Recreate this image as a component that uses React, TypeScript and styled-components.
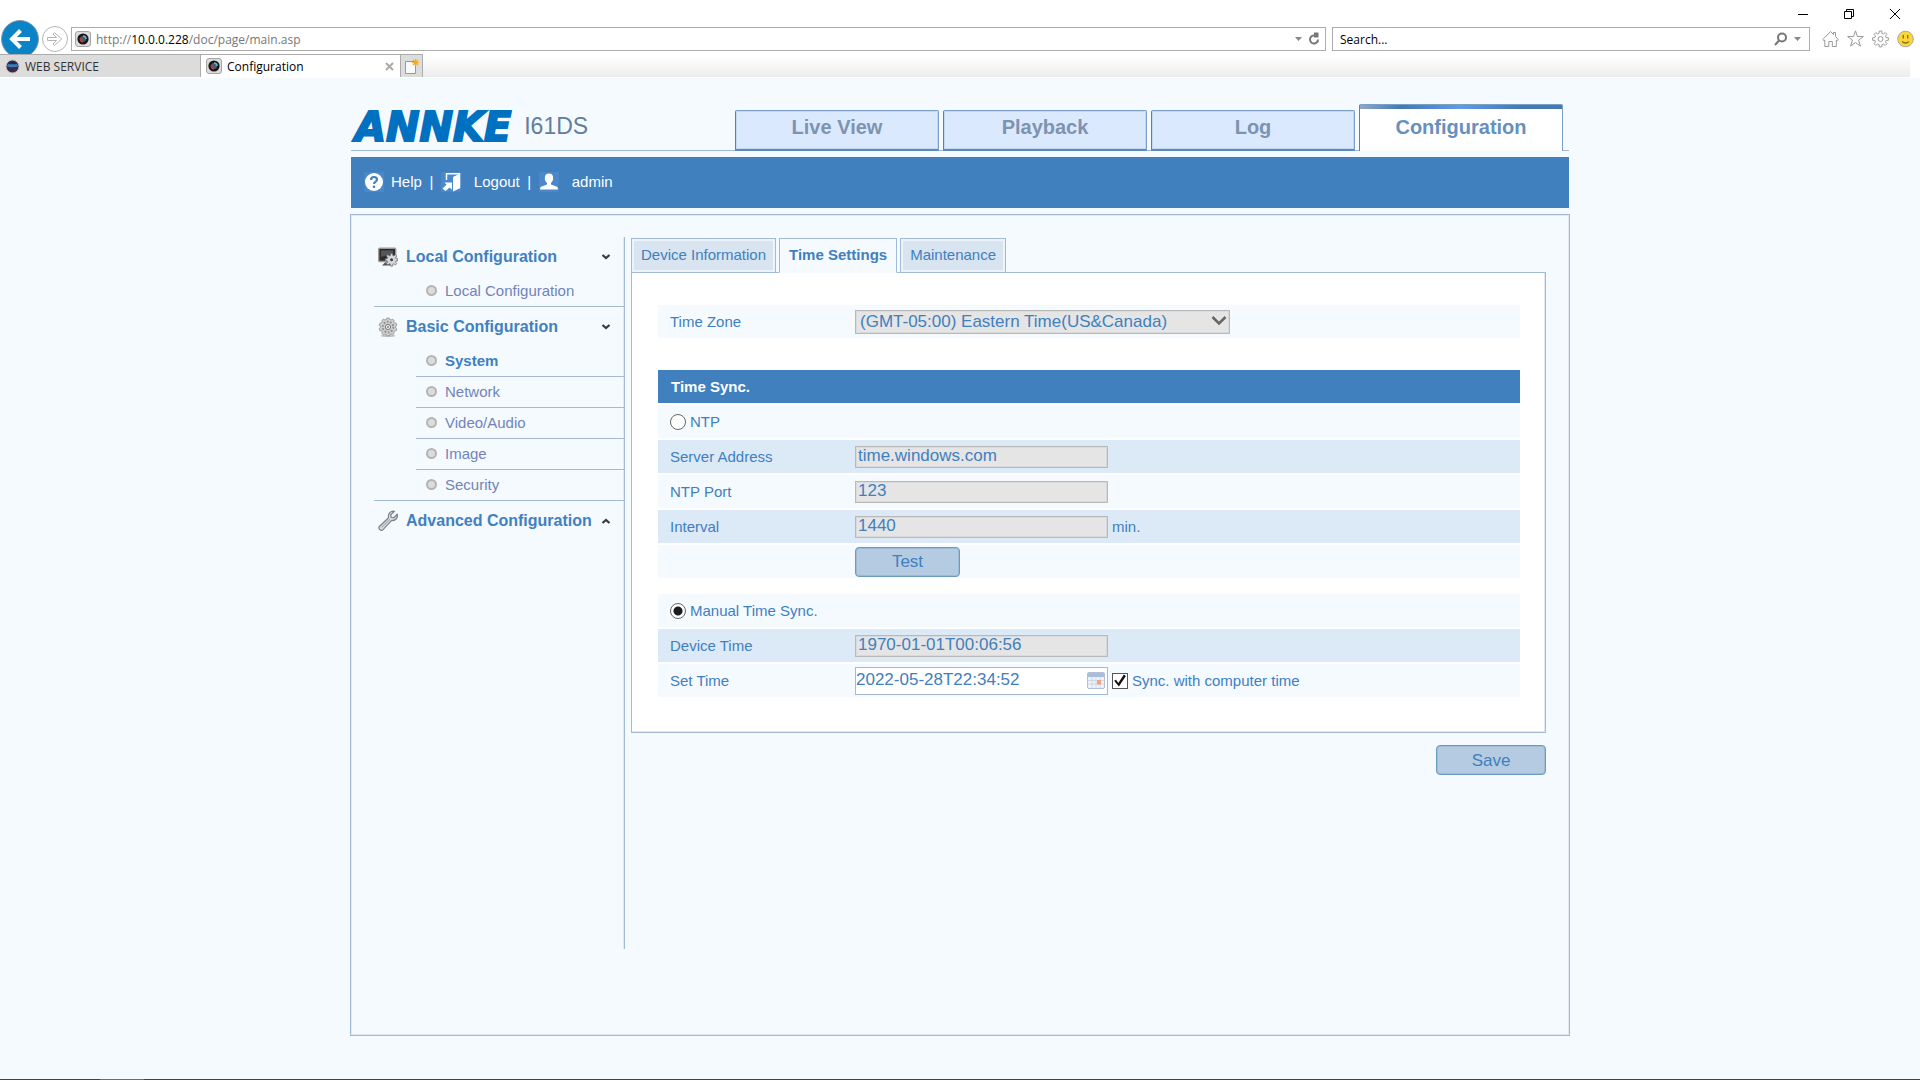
import React from "react";
import styled, { createGlobalStyle, css } from "styled-components";

const c = {
  page: "#f5faff",
  blue: "#4080bf",
  line: "#a3bad4",
  soft: "#e0e8f2",
  band: "#dce9f7",
  muted: "#7184b8",
};

const GlobalStyle = createGlobalStyle`
  *, *::before, *::after { box-sizing: border-box; }
  body { margin: 0; background: ${c.page}; }
  button, input, select { font-family: inherit; margin: 0; }
  svg { display: block; flex: none; }
`;

const Screen = styled.div`
  min-height: 100vh;
  display: flex;
  flex-direction: column;
  font-family: "Liberation Sans", Arial, sans-serif;
  font-size: 15px;
  color: ${c.blue};
`;

/* ---------- browser frame ---------- */

const Browser = styled.header`
  background: #fff;
  border-bottom: 1px solid #fff;
  font-family: "Open Sans", "Noto Sans", sans-serif;
  font-size: 12px;
  color: #000;
`;

const WindowBar = styled.div`
  height: 20px;
  padding: 8px 19px 0 0;
  display: flex;
  justify-content: flex-end;
  gap: 34px;
`;

const PlainButton = styled.button`
  display: flex;
  align-items: center;
  justify-content: center;
  padding: 0;
  border: 0;
  background: none;
  cursor: pointer;
`;

const NavBar = styled.div`
  height: 34px;
  padding: 4px 6px 0 1px;
  display: flex;
  align-items: center;
  overflow: hidden;
`;

const BackButton = styled(PlainButton)`
  flex: none;
  width: 38px;
  height: 38px;
  border: 1px solid #8a9aa5;
  border-radius: 50%;
  background: #0a84c6;
`;

const ForwardButton = styled(PlainButton)`
  flex: none;
  width: 26px;
  height: 26px;
  margin: 0 3px;
  border: 1px solid #b5b5b5;
  border-radius: 50%;
`;

const FieldBox = styled.div`
  height: 24px;
  display: flex;
  align-items: center;
  border: 1px solid #acacac;
  background: #fff;
`;

const AddressBox = styled(FieldBox)`
  flex: 1;
  padding: 0 4px 0 3px;
  gap: 5px;
`;

const Address = styled.div`
  flex: 1;
  color: #777;
  b { font-weight: 400; color: #000; }
`;

const SearchBox = styled(FieldBox)`
  width: 478px;
  margin-left: 6px;
  padding: 0 8px 0 7px;
  gap: 6px;
`;

const SearchInput = styled.input`
  flex: 1;
  min-width: 0;
  padding: 0;
  border: 0;
  outline: 0;
  font-size: 12px;
  background: none;
  &::placeholder { color: #000; opacity: 1; }
`;

const Tools = styled.div`
  display: flex;
  gap: 8px;
  margin-left: 12px;
`;

const TabStrip = styled.div`
  height: 23px;
  display: flex;
  margin-right: 10px;
  background: linear-gradient(#fff 10%, #ececec);
`;

const BrowserTab = styled.div<{ $on?: boolean }>`
  width: ${(p) => (p.$on ? 200 : 201)}px;
  padding: 0 6px 0 5px;
  display: flex;
  align-items: center;
  gap: 5px;
  border: solid #acacac;
  border-width: 1px 1px 0 0;
  background: ${(p) => (p.$on ? "#fff" : "#dcdcdc")};
  color: ${(p) => (p.$on ? "#000" : "#333")};
`;

const TabName = styled.span`
  flex: 1;
`;

const NewTab = styled(PlainButton)`
  width: 22px;
  border: solid #acacac;
  border-width: 1px 1px 0 0;
  background: #dcdcdc;
`;

/* ---------- device page ---------- */

const Page = styled.div`
  flex: 1;
  width: 100%;
  max-width: 1220px;
  margin: 0 auto;
  padding: 26px 0 43px;
`;

const Masthead = styled.div`
  height: 47px;
  margin: 0 1px 6px;
  padding-right: 6px;
  display: flex;
  align-items: flex-end;
  border-bottom: 1px solid ${c.line};
`;

const Brand = styled.div`
  flex: 1;
  height: 46px;
  padding-left: 4px;
  display: flex;
  align-items: flex-start;
  gap: 13px;
  white-space: nowrap;
`;

const Logo = styled.span`
  font: italic bold 40px/46px "DejaVu Sans", sans-serif;
  color: #0070c0;
  -webkit-text-stroke: 2px #0070c0;
`;

const Model = styled.span`
  font-size: 23px;
  line-height: 44px;
  color: #647d9c;
`;

const MainNav = styled.nav`
  display: flex;
  align-items: flex-end;
  gap: 4px;
  margin-bottom: -1px;
`;

const MainTab = styled.a<{ $on?: boolean }>`
  width: 204px;
  height: 41px;
  padding-top: 4px;
  border: 1px solid #7ba0c8;
  border-left-color: #5085b8;
  border-bottom: 2px solid #5b8aba;
  border-radius: 2px 2px 0 0;
  box-shadow: inset 0 0 0 1px #c4d8f0;
  background: #dbe9ff;
  color: #7d93b0;
  font-size: 20px;
  font-weight: bold;
  line-height: 24px;
  text-align: center;
  text-decoration: none;
  ${(p) =>
    p.$on &&
    css`
      height: 47px;
      padding-top: 10px;
      border-bottom: 0;
      box-shadow: none;
      background: linear-gradient(90deg, #93a7c4, #4479b5 20%, #629ae6 50%, #4479b5 80%) 0 0 / 100% 4px no-repeat #fff;
      color: #6690c0;
    `}
`;

const UserBar = styled.div`
  height: 51px;
  margin: 0 1px 6px;
  padding: 0 0 2px 13px;
  display: flex;
  align-items: center;
  background: ${c.blue};
  color: #fff;
`;

const UserLink = styled.a<{ $gap: number }>`
  display: flex;
  align-items: center;
  gap: ${(p) => p.$gap}px;
  color: inherit;
  text-decoration: none;
  svg { background: #4a88c9; }
`;

const Bar = styled.span`
  width: 19px;
  text-align: center;
`;

const Body = styled.main`
  padding: 22px 23px 86px;
  display: flex;
  align-items: flex-start;
  border: 1px solid ${c.line};
  box-shadow: inset 0 0 0 1px ${c.soft};
`;

const Sidebar = styled.aside`
  flex: none;
  width: 251px;
  min-height: 712px;
  margin-right: 6px;
  border-right: 1px solid ${c.line};
  box-shadow: inset -1px 0 ${c.soft};
`;

const Group = styled.section<{ $ruled?: boolean }>`
  border-bottom: ${(p) => (p.$ruled ? `1px solid ${c.line}` : "0")};
`;

const GroupHead = styled.button`
  width: 100%;
  height: 39px;
  padding: 0 13px 0 4px;
  display: flex;
  align-items: center;
  gap: 8px;
  border: 0;
  background: none;
  color: ${c.blue};
  font-size: 16px;
  font-weight: bold;
  text-align: left;
  white-space: nowrap;
  cursor: pointer;
  span { flex: 1; }
`;

const Items = styled.ul`
  margin: 0 0 0 42px;
  padding: 0;
  list-style: none;
`;

const Item = styled.li`
  & + & { border-top: 1px solid ${c.line}; }
`;

const ItemLink = styled.a<{ $on?: boolean }>`
  height: 30px;
  padding: 0 0 2px 10px;
  display: flex;
  align-items: center;
  gap: 8px;
  color: ${(p) => (p.$on ? c.blue : c.muted)};
  font-weight: ${(p) => (p.$on ? "bold" : "normal")};
  text-decoration: none;
  &::before {
    content: "";
    width: 11px;
    height: 11px;
    border: 2px solid #b4b4b4;
    border-radius: 50%;
    background: #dcdcdc;
  }
`;

const Content = styled.form`
  flex: 1;
  min-width: 0;
  padding-top: 1px;
`;

const Tabs = styled.div`
  display: flex;
  gap: 3px;
`;

const Tab = styled.button<{ $on?: boolean }>`
  height: 35px;
  margin-bottom: -1px;
  padding: 0 9px 2px;
  border: 1px solid ${c.line};
  border-bottom-color: ${(p) => (p.$on ? c.page : c.line)};
  background: ${(p) => (p.$on ? c.page : "#d8e4f0")};
  box-shadow: inset 0 0 0 2px ${(p) => (p.$on ? c.page : "#edf3fa")};
  color: ${c.blue};
  font-size: 15px;
  font-weight: ${(p) => (p.$on ? "bold" : "normal")};
  white-space: nowrap;
  cursor: pointer;
`;

const Panel = styled.div`
  padding: 32px 25px 35px 26px;
  border: 1px solid ${c.line};
  box-shadow: inset -1px -1px ${c.soft};
  background: #fff;
`;

const Rows = styled.div<{ $space?: number }>`
  display: flex;
  flex-direction: column;
  gap: 2px;
  margin-top: ${(p) => p.$space || 0}px;
`;

const Row = styled.div<{ $alt?: boolean }>`
  min-height: 33px;
  padding-left: 12px;
  display: flex;
  align-items: center;
  background: ${(p) => (p.$alt ? c.band : c.page)};
`;

const Heading = styled.h2`
  margin: 0;
  padding-left: 13px;
  background: ${c.blue};
  color: #fff;
  font-size: 15px;
  line-height: 33px;
`;

const Name = styled.label`
  width: 185px;
`;

const Choice = styled.label`
  display: flex;
  align-items: center;
  gap: 4px;
`;

const Radio = styled.input`
  appearance: none;
  width: 16px;
  height: 16px;
  border: 1px solid #666;
  border-radius: 50%;
  background: #fff;
  &:checked { background: radial-gradient(#1c1c1c 4px, #fff 5px); }
`;

const Check = styled.input`
  appearance: none;
  width: 16px;
  height: 16px;
  border: 1px solid #555;
  background: #fff;
  &:checked::before {
    content: "";
    display: block;
    width: 14px;
    height: 14px;
    background: #111;
    clip-path: polygon(8% 52%, 22% 44%, 38% 68%, 78% 8%, 92% 18%, 42% 92%);
  }
`;

const field = css`
  border: 1px solid #b9b9b9;
  box-shadow: inset 0 0 0 1px #dadada;
  background: #e5e5e5;
  color: ${c.blue};
  font-size: 17px;
  opacity: 1;
`;

const Text = styled.input`
  ${field}
  width: 253px;
  height: 22px;
  padding: 0 2px 1px;
`;

const DateBox = styled.div`
  width: 253px;
  height: 28px;
  padding-right: 2px;
  display: flex;
  align-items: center;
  border: 1px solid ${c.line};
  background: #fff;
  input {
    flex: 1;
    min-width: 0;
    padding: 0 0 2px;
    border: 0;
    outline: 0;
    background: none;
    color: ${c.blue};
    font-size: 17px;
  }
`;

const SelectBox = styled.div`
  position: relative;
  svg {
    position: absolute;
    right: 3px;
    top: 5px;
    pointer-events: none;
  }
`;

const Select = styled.select`
  ${field}
  appearance: none;
  display: block;
  width: 375px;
  height: 24px;
  padding: 0 24px 0 4px;
`;

const Button = styled.button<{ $wide?: boolean }>`
  width: ${(p) => (p.$wide ? 110 : 105)}px;
  height: 30px;
  padding: 1px 0 0;
  border: 1px solid #6e9abc;
  border-radius: 4px;
  box-shadow: inset 0 0 0 1px #9dbbd6;
  background: #b4cbe2;
  color: ${c.blue};
  font-size: 17px;
  cursor: pointer;
`;

const After = styled.div`
  margin-left: 4px;
`;

const Footer = styled.div`
  margin-top: 12px;
  display: flex;
  justify-content: flex-end;
`;

const Taskbar = styled.footer`
  height: 2px;
  padding-left: 100px;
  background: #434343;
  &::before {
    content: "";
    display: block;
    width: 44px;
    height: 2px;
    background: #6b6b6b;
  }
`;

/* ---------- drawings ---------- */

const CameraIcon = () => (
  <svg width="16" height="16" viewBox="0 0 16 16">
    <rect x=".5" y=".5" width="15" height="15" rx="2.5" fill="#dcdcdc" stroke="#a5a5a5" />
    <circle cx="8" cy="8" r="5.600" fill="#151515" />
    <circle cx="8" cy="8" r="3" fill="#4b5b6a" />
    <path d="M8 5a3 3 0 0 1 3 3" stroke="#63b5d8" strokeWidth="1.5" fill="none" />
    <path d="M5.5 7a3 3 0 0 0 2.500 4" stroke="#c83a3a" strokeWidth="1.600" fill="none" />
  </svg>
);

const GlobeIcon = () => (
  <svg width="15" height="15" viewBox="0 0 15 15">
    <circle cx="7.5" cy="7.500" r="6.500" fill="#3a2c48" stroke="#c5bfc0" />
    <path d="M2 7.500a5.600 5.600 0 0 1 11 0Q7.500 9 2 7.500z" fill="#3a7dbb" />
    <path d="M3 5a5 5 0 0 1 9 0Q7.500 5.500 3 5z" fill="#1d2b4e" />
  </svg>
);

const gearPath = (n: number, r1: number, r2: number) => {
  const pts: string[] = [];
  for (let i = 0; i < n; i++) {
    [[-0.32, r1], [-0.2, r2], [0.2, r2], [0.32, r1]].forEach(([o, r]) => {
      const a = ((i + o) / n) * Math.PI * 2;
      pts.push(`${(Math.sin(a) * r).toFixed(2)} ${(-Math.cos(a) * r).toFixed(2)}`);
    });
  }
  return `M${pts.join("L")}Z`;
};

const CogIcon = () => (
  <svg width="17" height="20" viewBox="-8.5 -10 17 20" fill="none" stroke="#999">
    <path d={gearPath(8, 5.8, 8)} />
    <circle r="2.500" />
  </svg>
);

const HomeIcon = () => (
  <svg width="17" height="20" viewBox="0 0 17 20" fill="none" stroke="#999">
    <path d="M.8 10.500 8.500 2.500l3 3V3.500h2v4l2.800 3-1.200 1.200-.8-.7v6.500h-4V12.500H6.800v5h-4V11l-.8.700z" />
  </svg>
);

const StarIcon = () => (
  <svg width="17" height="20" viewBox="0 0 17 20" fill="none" stroke="#999">
    <path d="M8.500 1.800l1.900 5.700h6l-4.800 3.600 1.800 6-4.900-3.600-4.900 3.600 1.800-6L.6 7.500h6z" />
  </svg>
);

const SmileIcon = () => (
  <svg width="17" height="20" viewBox="0 0 17 20">
    <circle cx="8.500" cy="10" r="7.800" fill="#fcd638" stroke="#a9a9a9" />
    <path d="M6.300 6v3.500M10.700 6v3.500M5 12.500q3.500 3 7 0" fill="none" stroke="#8a6d13" strokeWidth="1.400" />
  </svg>
);

const Caret = () => (
  <svg width="7" height="4" viewBox="0 0 7 4"><path d="M0 0h7L3.500 4z" fill="#888" /></svg>
);

const HelpIcon = () => (
  <svg width="20" height="20" viewBox="0 0 20 20">
    <circle cx="10" cy="10" r="9" fill="#fff" />
    <path d="M7 8q0-3 3-3t3 2.600q0 1.400-1.600 2.300-1.300.700-1.300 2" fill="none" stroke={c.blue} strokeWidth="2.200" />
    <circle cx="10" cy="14.700" r="1.300" fill={c.blue} />
  </svg>
);

const LogoutIcon = () => (
  <svg width="20" height="20" viewBox="0 0 20 20">
    <path d="M5.500 8V1.800h13v14" fill="none" stroke="#fff" strokeWidth="1.500" />
    <path d="M12 5l7-3.500v14.700L12 19.500z" fill="#fff" />
    <path d="M3.500 10.500H11v7.200l-2.300-2.100L4.500 19l-3-2.600 4-3.700z" fill="#fff" />
  </svg>
);

const PersonIcon = () => (
  <svg width="20" height="20" viewBox="0 0 20 20">
    <path d="M10 1.500c3 0 4.200 2 4.200 4.500 0 2.200-1 4-2.200 5v1.500l6 2.300q1 .6 1 2.700H1q0-2.100 1-2.700l6-2.300V11C6.800 10 5.800 8.200 5.800 6c0-2.500 1.200-4.500 4.200-4.500z" fill="#fff" />
  </svg>
);

const MonitorIcon = () => (
  <svg width="20" height="20" viewBox="0 0 20 20">
    <rect x=".7" y="1.200" width="17" height="13.300" rx="1" fill="#2c2c2c" stroke="#9a9a9a" strokeWidth="1.400" />
    <path d="M3 3.500h12v3L3 10z" fill="#565656" />
    <path d="M4 18.500h8v-3H7z" fill="#555" />
    <g transform="translate(13.600 12.800)">
      <path d={gearPath(8, 4.6, 6.4)} fill="#d6d6d6" stroke="#6d6d6d" strokeWidth=".8" />
      <circle r="2" fill="#444" stroke="#fff" strokeWidth=".7" />
    </g>
  </svg>
);

const GearIcon = () => (
  <svg width="20" height="20" viewBox="-10 -10 20 20">
    <ellipse cy="8.800" rx="7.500" ry="1.200" fill="#c4c4c4" />
    <path d={gearPath(10, 7.8, 9)} fill="#cfcfcf" stroke="#8f8f8f" strokeWidth=".8" />
    <circle r="5.300" fill="none" stroke="#8e8e8e" strokeWidth="2" strokeDasharray="1.700 1.600" />
    <circle r="2.600" fill="#ececec" stroke="#777" />
    <circle r=".9" fill="#777" />
  </svg>
);

const WrenchIcon = () => (
  <svg width="20" height="21" viewBox="0 0 20 21">
    <path d="M16.500 1.300l-3.700 3.500.3 2.600 2.700.3 3.500-3.500c.8 3.300-1.600 6.800-5.600 6.200L5 19.600c-2 2-5.300-1.200-3.400-3.300l9-8.600C9.600 3.700 13 .400 16.500 1.300z" fill="#dfe4ea" stroke="#7c838d" strokeWidth="1.300" strokeLinejoin="round" />
    <path d="M3.500 17.500l8.500-8.200" stroke="#aab2bd" strokeWidth="1.300" />
  </svg>
);

const Chevron = ({ up }: { up?: boolean }) => (
  <svg width="10" height="8" viewBox="0 0 10 8">
    <path d={up ? "M1.500 6 5 3l3.500 3" : "M1.500 2 5 5l3.500-3"} fill="none" stroke="#3c3c3c" strokeWidth="2.300" />
  </svg>
);

const CalendarIcon = () => (
  <svg width="18" height="17" viewBox="0 0 18 17">
    <rect x=".5" y=".5" width="17" height="16" rx="1.500" fill="#eef3fa" stroke="#b3bfd4" />
    <path d="M1 1h16v4H1z" fill="#a9bddf" />
    <path d="M1 8.500h16M1 12h16M5 5v11M9 5v11M13 5v11" stroke="#cdd8ea" />
    <rect x="10" y="8" width="4" height="4.500" fill="#f2a185" />
  </svg>
);

/* ---------- screen ---------- */

const basicItems = ["System", "Network", "Video/Audio", "Image", "Security"];
const mainTabs = ["Live View", "Playback", "Log", "Configuration"];
const pageTabs = ["Device Information", "Time Settings", "Maintenance"];
const ntpFields = [
  { id: "server", label: "Server Address", value: "time.windows.com", alt: true },
  { id: "port", label: "NTP Port", value: "123" },
  { id: "interval", label: "Interval", value: "1440", alt: true, unit: "min." },
];

export default function App() {
  return (
    <Screen>
      <GlobalStyle />
      <Browser>
        <WindowBar>
          <PlainButton aria-label="Minimize">
            <svg width="12" height="12"><path d="M1 6.500h10" stroke="#000" /></svg>
          </PlainButton>
          <PlainButton aria-label="Restore">
            <svg width="12" height="12" fill="none" stroke="#000"><path d="M1.500 3.500h7v7h-7zM3.500 3.500v-2h7v7h-2" /></svg>
          </PlainButton>
          <PlainButton aria-label="Close">
            <svg width="12" height="12"><path d="M1 1l10 10M11 1L1 11" stroke="#000" /></svg>
          </PlainButton>
        </WindowBar>
        <NavBar>
          <BackButton aria-label="Back">
            <svg width="22" height="20" viewBox="0 0 22 20" fill="none" stroke="#fff" strokeWidth="4">
              <path d="M21 10H4M11.500 1.500 3 10l8.500 8.500" />
            </svg>
          </BackButton>
          <ForwardButton aria-label="Forward">
            <svg width="16" height="14" viewBox="0 0 16 14" fill="none" stroke="#b5b5b5">
              <path d="M.5 5.500h9L6 2l1.500-1.300L14.800 7l-7.300 6.300L6 12l3.500-3.500h-9z" />
            </svg>
          </ForwardButton>
          <AddressBox>
            <CameraIcon />
            <Address>http://<b>10.0.0.228</b>/doc/page/main.asp</Address>
            <Caret />
            <PlainButton aria-label="Refresh">
              <svg width="14" height="14" viewBox="0 0 14 14">
                <path d="M11 7.500A4 4 0 1 1 8.500 3.800" fill="none" stroke="#777" strokeWidth="2" />
                <path d="M7 .5h4.500v5H7z" fill="#777" />
              </svg>
            </PlainButton>
          </AddressBox>
          <SearchBox>
            <SearchInput aria-label="Search" placeholder="Search..." />
            <svg width="14" height="14" viewBox="0 0 14 14" fill="none" stroke="#777" strokeWidth="2">
              <circle cx="8" cy="5.500" r="4" /><path d="M5 8.500 1 13" />
            </svg>
            <Caret />
          </SearchBox>
          <Tools>
            <PlainButton aria-label="Home"><HomeIcon /></PlainButton>
            <PlainButton aria-label="Favorites"><StarIcon /></PlainButton>
            <PlainButton aria-label="Tools"><CogIcon /></PlainButton>
            <PlainButton aria-label="Feedback"><SmileIcon /></PlainButton>
          </Tools>
        </NavBar>
        <TabStrip>
          <BrowserTab><GlobeIcon /><TabName>WEB SERVICE</TabName></BrowserTab>
          <BrowserTab $on>
            <CameraIcon /><TabName>Configuration</TabName>
            <PlainButton aria-label="Close tab">
              <svg width="9" height="9"><path d="M1 1l7 7M8 1L1 8" stroke="#aaa" strokeWidth="2" /></svg>
            </PlainButton>
          </BrowserTab>
          <NewTab aria-label="New tab">
            <svg width="17" height="17" viewBox="0 0 17 17">
              <path d="M2.500 3.500h10v12h-10z" fill="#fafafa" stroke="#999" />
              <path d="M12.500 1v7M9 4.500h7M10 2l5 5M15 2l-5 5" stroke="#f6a91e" strokeWidth="1.200" />
            </svg>
          </NewTab>
        </TabStrip>
      </Browser>

      <Page>
        <Masthead>
          <Brand><Logo>ANNKE</Logo><Model>I61DS</Model></Brand>
          <MainNav>
            {mainTabs.map((t) => (
              <MainTab key={t} href="#" $on={t === "Configuration"}>{t}</MainTab>
            ))}
          </MainNav>
        </Masthead>
        <UserBar>
          <UserLink href="#" $gap={7}><HelpIcon />Help</UserLink>
          <Bar>|</Bar>
          <UserLink href="#" $gap={13}><LogoutIcon />Logout</UserLink>
          <Bar>|</Bar>
          <UserLink href="#" $gap={13}><PersonIcon />admin</UserLink>
        </UserBar>

        <Body>
          <Sidebar>
            <Group $ruled>
              <GroupHead><MonitorIcon /><span>Local Configuration</span><Chevron /></GroupHead>
              <Items><Item><ItemLink href="#">Local Configuration</ItemLink></Item></Items>
            </Group>
            <Group $ruled>
              <GroupHead><GearIcon /><span>Basic Configuration</span><Chevron /></GroupHead>
              <Items>
                {basicItems.map((t) => (
                  <Item key={t}><ItemLink href="#" $on={t === "System"}>{t}</ItemLink></Item>
                ))}
              </Items>
            </Group>
            <Group>
              <GroupHead><WrenchIcon /><span>Advanced Configuration</span><Chevron up /></GroupHead>
            </Group>
          </Sidebar>

          <Content onSubmit={(e) => e.preventDefault()}>
            <Tabs>
              {pageTabs.map((t) => (
                <Tab key={t} type="button" $on={t === "Time Settings"}>{t}</Tab>
              ))}
            </Tabs>
            <Panel>
              <Row>
                <Name htmlFor="zone">Time Zone</Name>
                <SelectBox>
                  <Select id="zone" disabled>
                    <option>(GMT-05:00) Eastern Time(US&amp;Canada)</option>
                  </Select>
                  <svg width="16" height="12" viewBox="0 0 16 12">
                    <path d="M1.500 2 8 8.500 14.500 2" fill="none" stroke="#666" strokeWidth="2.500" />
                  </svg>
                </SelectBox>
              </Row>
              <Rows $space={32}>
                <Heading>Time Sync.</Heading>
                <Row><Choice><Radio type="radio" name="sync" />NTP</Choice></Row>
                {ntpFields.map((f) => (
                  <Row key={f.id} $alt={f.alt}>
                    <Name htmlFor={f.id}>{f.label}</Name>
                    <Text id={f.id} defaultValue={f.value} disabled />
                    {f.unit && <After>{f.unit}</After>}
                  </Row>
                ))}
                <Row><Name as="span" /><Button type="button">Test</Button></Row>
              </Rows>
              <Rows $space={16}>
                <Row><Choice><Radio type="radio" name="sync" defaultChecked />Manual Time Sync.</Choice></Row>
                <Row $alt>
                  <Name htmlFor="device">Device Time</Name>
                  <Text id="device" defaultValue="1970-01-01T00:06:56" disabled />
                </Row>
                <Row>
                  <Name htmlFor="set">Set Time</Name>
                  <DateBox>
                    <input id="set" defaultValue="2022-05-28T22:34:52" />
                    <PlainButton type="button" aria-label="Pick a date"><CalendarIcon /></PlainButton>
                  </DateBox>
                  <After>
                    <Choice><Check type="checkbox" defaultChecked />Sync. with computer time</Choice>
                  </After>
                </Row>
              </Rows>
            </Panel>
            <Footer><Button $wide type="submit">Save</Button></Footer>
          </Content>
        </Body>
      </Page>
      <Taskbar />
    </Screen>
  );
}
